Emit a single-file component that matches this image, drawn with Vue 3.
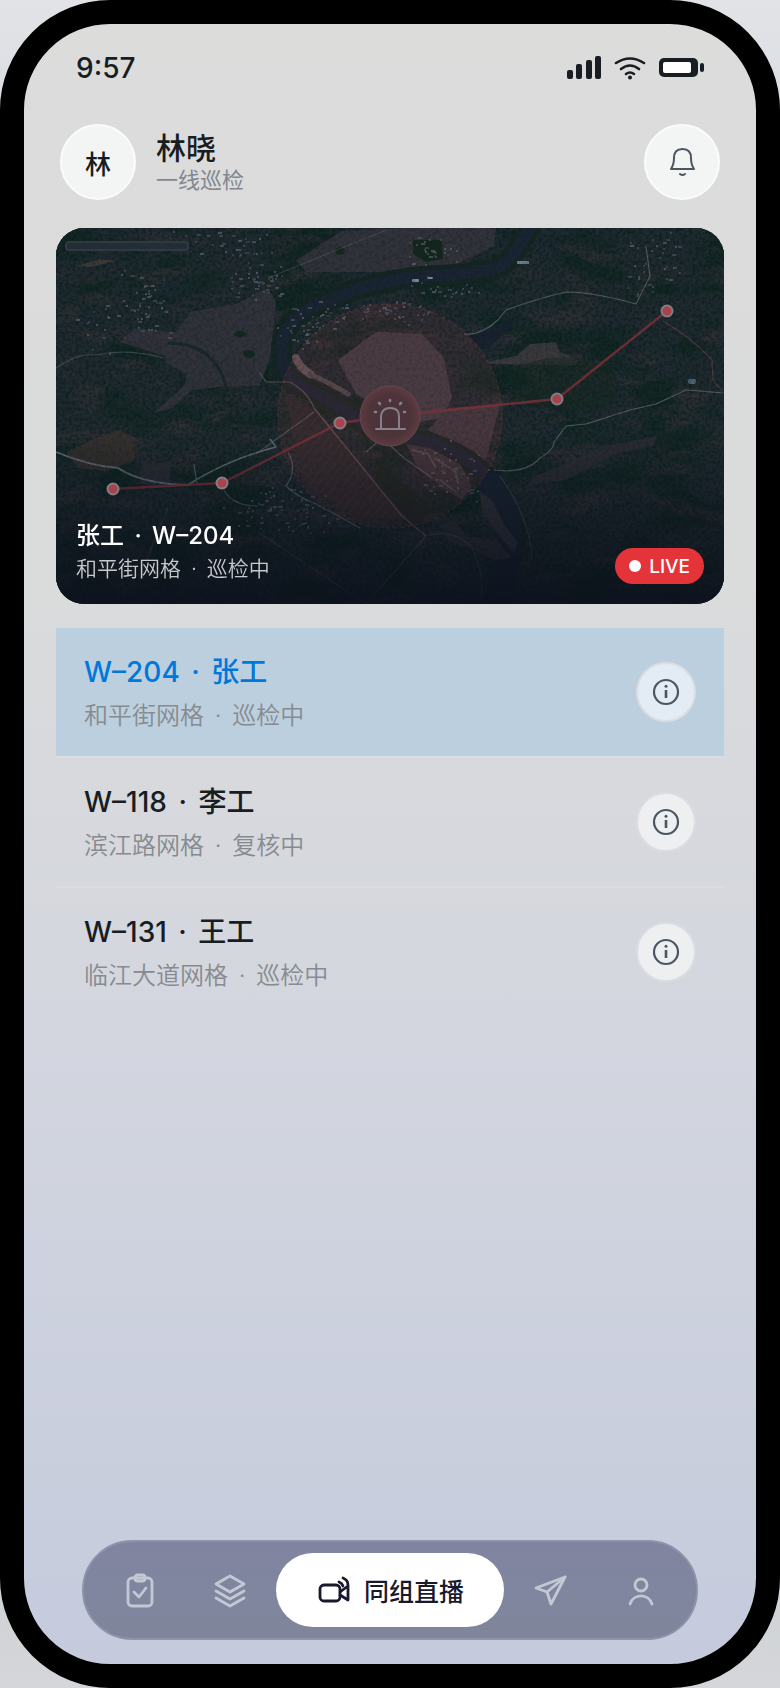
<script setup>
import { ref, computed } from 'vue'

const crews = [
  { id: 'W–204', name: '张工', area: '和平街网格', status: '巡检中' },
  { id: 'W–118', name: '李工', area: '滨江路网格', status: '复核中' },
  { id: 'W–131', name: '王工', area: '临江大道网格', status: '巡检中' }
]

const route = [
  { x: 57, y: 261 },
  { x: 166, y: 255 },
  { x: 284, y: 195 },
  { x: 501, y: 171 },
  { x: 611, y: 83 }
]

// village clusters: centre, spread and number of roofs
const villages = [
  { x: 90, y: 75, w: 30, h: 36, n: 46 },
  { x: 202, y: 52, w: 34, h: 20, n: 44 },
  { x: 160, y: 16, w: 80, h: 16, n: 34 },
  { x: 330, y: 84, w: 54, h: 14, n: 44 },
  { x: 250, y: 94, w: 34, h: 30, n: 46 },
  { x: 376, y: 22, w: 30, h: 14, n: 26 },
  { x: 595, y: 38, w: 34, h: 40, n: 34 },
  { x: 222, y: 282, w: 64, h: 26, n: 70 },
  { x: 40, y: 98, w: 40, h: 30, n: 16 },
  { x: 400, y: 62, w: 50, h: 16, n: 22 },
  { x: 396, y: 244, w: 44, h: 34, n: 44 }
]

let seed = 7
function rand() {
  seed = (seed * 16807) % 2147483647
  return seed / 2147483647
}

const roofColors = ['#5c6674', '#4a4f58', '#63585c', '#3f5066', '#555f60']
const roofs = villages.flatMap(v =>
  Array.from({ length: v.n }, () => ({
    x: Math.round(v.x + (rand() + rand() - 1) * v.w),
    y: Math.round(v.y + (rand() + rand() - 1) * v.h),
    s: rand() > 0.7 ? 4 : 2,
    fill: roofColors[Math.floor(rand() * roofColors.length)]
  }))
)

const activeId = ref('W–204')
const activeTab = ref('live')
const active = computed(() => crews.find(c => c.id === activeId.value))
const siren = { x: 334, y: 188 }
const line = computed(() =>
  [...route.slice(0, 3), siren, ...route.slice(3)].map(p => `${p.x},${p.y}`).join(' ')
)
</script>

<template>
  <div class="phone">
    <div class="status-bar">
      <span class="time">9:57</span>
      <div class="status-icons">
        <svg width="34" height="24" viewBox="0 0 34 24" fill="#171d22">
          <rect x="0" y="14" width="6" height="9" rx="2" />
          <rect x="9" y="8" width="6" height="15" rx="2" />
          <rect x="19" y="4" width="6" height="19" rx="2" />
          <rect x="28" y="0" width="6" height="23" rx="2" />
        </svg>
        <svg width="32" height="24" viewBox="0 0 32 24" fill="none" stroke="#171d22" stroke-width="2.6" stroke-linecap="round">
          <path d="M2 7 Q16 -2 30 7" />
          <path d="M7 13 Q16 6 25 13" />
          <path d="M12 18 Q16 15 20 18" />
          <circle cx="16" cy="21.5" r="2" fill="#171d22" stroke="none" />
        </svg>
        <svg width="45" height="24" viewBox="0 0 45 24">
          <rect x="0" y="2" width="39" height="19" rx="5" fill="#171d22" />
          <rect x="4" y="6" width="28" height="11" rx="2" fill="#fff" />
          <rect x="41" y="7" width="4" height="9" rx="2" fill="#171d22" />
        </svg>
      </div>
    </div>

    <header class="header">
      <div class="avatar">林</div>
      <div class="user">
        <h1>林晓</h1>
        <p>一线巡检</p>
      </div>
      <button class="bell" aria-label="通知">
        <svg width="28" height="30" viewBox="0 0 28 30" fill="none" stroke="#4b5660" stroke-width="2" stroke-linecap="round" stroke-linejoin="round">
          <path d="M3 22 C5 19 6 17 6 11 C6 5 9 2 14.5 2 C20 2 23 5 23 11 C23 17 24 19 26 22 Z" />
          <path d="M12 27 Q14.5 29 17 27" />
        </svg>
      </button>
    </header>

    <main class="content">
      <section class="map-card">
        <svg class="map" viewBox="0 0 668 376" preserveAspectRatio="xMidYMid slice" aria-hidden="true">
          <defs>
            <filter id="patches" x="0" y="0" width="100%" height="100%" color-interpolation-filters="sRGB">
              <feTurbulence type="fractalNoise" baseFrequency="0.014 0.03" numOctaves="5" seed="4" />
              <feColorMatrix values="0 0 0 0 0.07  0 0 0 0 0.15  0 0 0 0 0.14  4 0 0 0 -1.8" />
            </filter>
            <filter id="soil" x="0" y="0" width="100%" height="100%" color-interpolation-filters="sRGB">
              <feTurbulence type="fractalNoise" baseFrequency="0.02 0.05" numOctaves="5" seed="21" />
              <feColorMatrix values="0 0 0 0 0.19  0 0 0 0 0.19  0 0 0 0 0.21  0 4 0 0 -2" />
            </filter>
            <filter id="grain" x="0" y="0" width="100%" height="100%" color-interpolation-filters="sRGB">
              <feTurbulence type="fractalNoise" baseFrequency="0.3" numOctaves="3" seed="9" />
              <feColorMatrix values="0 0 0 0 0.04  0 0 0 0 0.11  0 0 0 0 0.1  0 3 0 0 -1.3" />
            </filter>
            <linearGradient id="shade" x1="0" y1="0" x2="0" y2="1">
              <stop offset="0.55" stop-color="#0b101b" stop-opacity="0" />
              <stop offset="1" stop-color="#0b101b" stop-opacity="0.85" />
            </linearGradient>
            <radialGradient id="glow">
              <stop offset="0" stop-color="#4a3339" />
              <stop offset="0.7" stop-color="#4d343a" />
              <stop offset="1" stop-color="#5e3a40" />
            </radialGradient>
            <pattern id="plots" width="19" height="14" patternUnits="userSpaceOnUse" patternTransform="rotate(-28) skewX(12)">
              <path d="M0 0H19M0 0V14" stroke="#25282f" stroke-width="1" />
            </pattern>
            <pattern id="rows" width="7" height="60" patternUnits="userSpaceOnUse" patternTransform="rotate(38)">
              <path d="M0 0V60" stroke="#5b4646" stroke-width="1" opacity="0.4" />
            </pattern>
          </defs>

          <rect width="668" height="376" fill="#1f2a30" />
          <rect width="668" height="376" filter="url(#patches)" />
          <rect width="668" height="376" filter="url(#soil)" opacity="0.8" />
          <rect width="668" height="376" filter="url(#grain)" opacity="0.5" />

          <!-- farmland -->
          <g fill="#34343c" opacity="0.9">
            <path d="M134 84 L180 76 L212 60 L220 74 L214 130 L204 157 L162 159 L136 162 L116 180 L98 185 L128 158 L131 146 L112 136 L108 128 L64 114 L78 101 L120 104 Z" />
            <path d="M240 32 L286 3 L350 0 L440 0 L438 18 L400 36 L340 44 L250 44 Z" />
            <path d="M10 224 L40 210 L62 202 L80 210 L78 232 L52 243 L22 240 Z" fill="#36312f" />
            <path d="M86 236 L116 234 L114 256 L84 256 Z" fill="#2b2f35" />
            <path d="M430 134 L460 128 L474 116 L500 114 L504 124 L522 132 L520 137 L436 136 Z" fill="#3d3a3e" />
            <path d="M480 248 L550 218 L600 208 L598 218 L560 226 L510 252 L470 258 Z" fill="#2d2d35" />
          </g>
          <path d="M134 84 L180 76 L212 60 L220 74 L214 130 L204 157 L162 159 L136 162 L116 180 L98 185 L128 158 L131 146 L112 136 L64 114 Z M240 32 L286 3 L440 0 L438 18 L400 36 L250 44 Z" fill="url(#plots)" />
          <path d="M112 115 Q158 115 170 158" fill="none" stroke="#1a2828" stroke-width="3" />
          <g fill="#14271f">
            <ellipse cx="193" cy="126" rx="6" ry="4" />
            <ellipse cx="184" cy="106" rx="6" ry="3" />
            <ellipse cx="284" cy="23" rx="5" ry="4" />
            <path d="M357 12 L386 12 L387 31 L370 34 L357 26 Z" />
            <path d="M450 144 Q500 118 552 138 Q575 160 552 180 Q500 190 456 170 Z" opacity="0.5" />
          </g>

          <!-- fields enclosed by the bend -->
          <path d="M282 132 L320 104 L366 106 L388 130 L396 170 L386 190 L352 196 L300 166 Z" fill="#3e3b43" />
          <path d="M392 180 L444 176 L430 232 L400 216 L372 202 Z" fill="#39353c" />
          <path d="M230 170 L260 182 L352 290 L300 292 L246 250 Z" fill="#26282b" />
          <path d="M230 170 L260 182 L352 290 L300 292 L246 250 Z M392 180 L444 176 L430 232 L372 202 Z" fill="url(#rows)" />
          <path d="M324 232 L376 282 L360 300 L318 254 Z" fill="#152520" />

          <!-- river and sandbanks -->
          <g fill="none" stroke-linecap="round" stroke-linejoin="round">
            <path d="M476 -4 Q462 24 446 38 Q420 47 370 48 Q310 54 274 72 Q228 88 226 116 Q224 146 240 156 Q270 168 300 190 Q318 208 350 210 Q410 220 432 252 Q464 296 458 322 Q446 352 440 390" stroke="#152521" stroke-width="21" />
            <path d="M476 -4 Q462 24 446 38 Q420 47 370 48 Q310 54 274 72 Q228 88 226 116 Q224 146 240 156 Q270 168 300 190 Q318 208 350 210 Q410 220 432 252 Q464 296 458 322 Q446 352 440 390" stroke="#1a2432" stroke-width="12" />
            <path d="M436 258 Q458 292 452 326 Q444 354 440 384" stroke="#192331" stroke-width="26" />
            <path d="M240 130 Q244 140 254 146" stroke="#5b5456" stroke-width="8" />
            <path d="M254 146 Q272 154 292 166" stroke="#4c474b" stroke-width="5" />
          </g>
          <path d="M350 216 L374 220 L404 236 L416 258 L406 272 L384 258 L362 240 Z" fill="#38343a" />
          <path d="M384 298 L398 292 L410 308 L440 312 L456 330 L438 332 L414 320 L392 314 Z" fill="#2d3037" />
          <path d="M424 264 L436 272 L448 296 L462 314 L458 326 L440 304 L426 284 Z" fill="#30323a" />
          <path d="M356 222 L372 226 L380 240 M378 230 L400 244 L402 256 M384 252 L400 264" fill="none" stroke="#544c50" stroke-width="2" />
          <path d="M412 109 Q446 96 464 85 Q452 104 428 123 Z" fill="#18212e" />

          <!-- roads -->
          <g fill="none" stroke="#6b7177" stroke-width="1.2" stroke-linejoin="round" opacity="0.7">
            <path d="M408 106 Q424 108 442 92 L450 82 Q480 71 510 64 Q538 64 580 76 L594 48 L590 18" />
            <path d="M438 242 Q470 246 484 230 Q498 222 498 214 L510 198 L530 196 L574 182 L600 176 L630 162 L668 165" />
            <path d="M607 93 Q636 110 656 132 L657 152 L668 166" stroke="#634144" />
            <path d="M204 145 L210 154 L234 154 Q252 164 258 180 L346 288 L370 308" stroke="#74605f" />
            <path d="M258 184 L200 226" stroke="#5a6064" />
            <path d="M0 224 Q34 238 62 240 Q86 256 132 257 Q170 232 220 219 L214 211" stroke="#78838b" stroke-width="1.8" />
            <path d="M232 224 Q242 242 230 258 Q240 268 260 276 L304 300" />
            <path d="M141 256 L138 236 M168 262 Q176 278 202 278" />
            <path d="M112 280 Q94 318 86 350 M202 304 L310 376 M370 308 L308 378" opacity="0.5" />
            <path d="M0 140 Q24 124 40 127 Q70 120 108 130" opacity="0.6" />
            <path d="M212 50 L330 2" opacity="0.5" />
            <path d="M310 224 L326 210 L348 230 L376 250" stroke="#756562" />
            <path d="M370 308 Q398 300 416 320 Q430 350 424 376 M444 248 Q474 290 476 330" opacity="0.5" />
          </g>
          <path d="M20 38 L44 31 L60 33 L34 39 Z" fill="#3c3835" />
          <g fill="#6d8b9c">
            <rect x="356" y="51" width="7" height="3" rx="1" />
            <rect x="371" y="49" width="6" height="2" rx="1" />
            <rect x="461" y="33" width="12" height="3" rx="1" />
            <rect x="632" y="151" width="8" height="5" rx="2" opacity="0.6" />
          </g>
          <rect v-for="(r, i) in roofs" :key="i" :x="r.x" :y="r.y" :width="r.s" height="2" :fill="r.fill" opacity="0.7" />
          <rect width="668" height="376" filter="url(#grain)" opacity="0.25" />
          <rect x="10" y="14" width="122" height="8" rx="3" fill="#222d36" stroke="#2f3941" stroke-width="2" />

          <circle :cx="siren.x" :cy="siren.y" r="112" fill="#a5454a" fill-opacity="0.12" stroke="#8c353e" stroke-opacity="0.5" stroke-dasharray="4 3" />
          <polyline :points="line" fill="none" stroke="#7e3038" stroke-width="2.4" opacity="0.8" />
          <rect width="668" height="376" fill="url(#shade)" />
          <circle v-for="p in route" :key="p.x" :cx="p.x" :cy="p.y" r="5.5" fill="#a8424c" stroke="#847d84" stroke-width="2" />
          <circle :cx="siren.x" :cy="siren.y" r="30" fill="url(#glow)" stroke="#62484e" />
          <g fill="none" stroke="#858089" stroke-width="2" stroke-linecap="round">
            <path d="M320 201 H349 M325 200 V188 Q326 180 334 180 Q343 180 343 188 V200" />
            <path d="M334 173 V172 M324 176 L323 175 M344 176 L345 175 M320 184 H319 M348 184 H349" stroke-width="2.6" />
          </g>
        </svg>
        <div class="caption">
          <strong>{{ active.name }} <span class="sep">·</span> {{ active.id }}</strong>
          <span>{{ active.area }} <span class="sep">·</span> {{ active.status }}</span>
        </div>
        <span class="live"><i class="dot"></i>LIVE</span>
      </section>

      <ul class="crew-list">
        <li v-for="crew in crews" :key="crew.id" :class="{ active: crew.id === activeId }" @click="activeId = crew.id">
          <div class="crew">
            <h2>{{ crew.id }} <span class="sep">·</span> {{ crew.name }}</h2>
            <p>{{ crew.area }} <span class="sep">·</span> {{ crew.status }}</p>
          </div>
          <button class="info" aria-label="详情" @click.stop>
            <svg width="28" height="28" viewBox="0 0 28 28" fill="none" stroke="#4c5662" stroke-width="2.2">
              <circle cx="14" cy="14" r="12" />
              <path d="M14 12V20" stroke-width="2.6" />
              <circle cx="14" cy="8.3" r="1.5" fill="#4c5662" stroke="none" />
            </svg>
          </button>
        </li>
      </ul>
    </main>

    <nav class="tabs">
      <button class="tab" aria-label="任务" @click="activeTab = 'tasks'">
        <svg width="36" height="36" viewBox="0 0 36 36">
          <rect x="6" y="6" width="24" height="28" rx="4" />
          <rect x="13" y="3" width="10" height="6" rx="2.5" />
          <path d="M12 20 L17 25 L24 16" />
        </svg>
      </button>
      <button class="tab" aria-label="图层" @click="activeTab = 'layers'">
        <svg width="36" height="36" viewBox="0 0 36 36">
          <path d="M18 4 L32 12 L18 20 L4 12 Z" />
          <path d="M4 19 L18 27 L32 19" />
          <path d="M4 26 L18 34 L32 26" />
        </svg>
      </button>
      <button class="tab current" @click="activeTab = 'live'">
        <svg width="36" height="36" viewBox="0 0 36 36">
          <rect x="4" y="13" width="20" height="16" rx="4" />
          <path d="M24 20 L32 14 V28 L24 23" />
          <path d="M23 10 Q26 11 27 14 M27 6 Q32 8 32 13" />
        </svg>
        <span>同组直播</span>
      </button>
      <button class="tab" aria-label="发送" @click="activeTab = 'send'">
        <svg width="36" height="36" viewBox="0 0 36 36">
          <path d="M33 5 L4 16 L15 20 L19 32 Z" />
          <path d="M33 5 L15 20" />
        </svg>
      </button>
      <button class="tab" aria-label="我的" @click="activeTab = 'me'">
        <svg width="36" height="36" viewBox="0 0 36 36">
          <circle cx="19" cy="13" r="6" />
          <path d="M8 32 A11.5 11.5 0 0 1 30 32" />
        </svg>
      </button>
    </nav>
  </div>
</template>

<style>
body {
  margin: 0;
  background: linear-gradient(180deg, #e2e3e7, #d8dde2 8%, #c9cdd2 85%, #d4d6d9);
}
</style>

<style scoped>
* {
  box-sizing: border-box;
  margin: 0;
  padding: 0;
}

.phone {
  display: flex;
  flex-direction: column;
  min-height: 100vh;
  padding: 0 32px 24px;
  border: 24px solid #000;
  border-radius: 110px;
  background: linear-gradient(180deg, #dcdcdb 0%, #dadbdb 35%, #d3d6df 62%, #c5cbdd 100%) padding-box;
  color: #171d22;
  font-family: Inter, "Noto Sans CJK SC", sans-serif;
}

button {
  border: none;
  background: none;
  font: inherit;
  color: inherit;
  cursor: pointer;
}

svg {
  display: block;
}

.sep {
  margin: 0 4px;
}

.status-bar {
  display: flex;
  align-items: center;
  justify-content: space-between;
  height: 88px;
  padding: 0 20px;
}

.time {
  font-size: 28px;
  font-weight: 500;
}

.status-icons {
  display: flex;
  gap: 13px;
}

.header {
  display: flex;
  align-items: center;
  gap: 20px;
  margin: 12px 4px 28px;
}

.avatar,
.bell {
  display: flex;
  align-items: center;
  justify-content: center;
  width: 76px;
  height: 76px;
  border: 2px solid #fafbfb;
  border-radius: 50%;
  background: #f3f5f5;
}

.avatar {
  font-size: 26px;
  font-weight: 500;
}

.user {
  flex: 1;
}

.user h1 {
  font-size: 30px;
  font-weight: 500;
  line-height: 36px;
}

.user p {
  color: #81888e;
  font-size: 22px;
  line-height: 28px;
}

.content {
  flex: 1;
}

.map-card {
  position: relative;
  height: 376px;
  overflow: hidden;
  border-radius: 28px;
  background: #1d282b;
}

.map {
  width: 100%;
  height: 100%;
}

.caption {
  position: absolute;
  left: 20px;
  bottom: 20px;
  display: flex;
  flex-direction: column;
  gap: 3px;
  color: #c6c8ca;
  font-size: 21px;
  font-weight: 350;
  line-height: 30px;
}

.caption strong {
  color: #fff;
  font-size: 24px;
  font-weight: 500;
}

.live {
  position: absolute;
  right: 20px;
  bottom: 20px;
  display: flex;
  align-items: center;
  gap: 8px;
  height: 36px;
  padding: 0 14px;
  border-radius: 18px;
  background: #e43439;
  color: #fff;
  font-size: 19px;
  font-weight: 500;
}

.dot {
  width: 12px;
  height: 12px;
  border-radius: 50%;
  background: #fff;
}

.crew-list {
  margin-top: 24px;
  list-style: none;
}

.crew-list li {
  display: flex;
  align-items: center;
  justify-content: space-between;
  height: 130px;
  padding: 0 28px;
  border-bottom: 2px solid #dbdde1;
  background-clip: padding-box;
  cursor: pointer;
}

.crew-list li:last-child {
  border-bottom-color: transparent;
}

.crew-list li.active {
  background-color: #bccfdf;
}

.crew {
  padding-top: 4px;
}

.crew-list h2 {
  font-size: 28px;
  font-weight: 500;
  line-height: 40px;
}

.crew-list .active h2 {
  color: #0078d9;
}

.crew-list p {
  margin-top: 4px;
  color: #868b90;
  font-size: 24px;
  font-weight: 350;
  line-height: 40px;
}

.info {
  display: flex;
  align-items: center;
  justify-content: center;
  width: 60px;
  height: 60px;
  border: 2px solid #dadde1;
  border-radius: 50%;
  background: #eeeff1;
}

.active .info {
  background: #e3ebf4;
}

.tabs {
  display: flex;
  align-items: center;
  gap: 2px;
  height: 100px;
  margin: 0 26px;
  padding: 0 12px;
  border: 2px solid #8e93ac;
  border-radius: 50px;
  background: linear-gradient(180deg, #8184a0, #7f869f 50%, #80859a);
}

.tab {
  display: flex;
  flex: 1;
  align-items: center;
  justify-content: center;
  height: 74px;
}

.tab svg {
  fill: none;
  stroke: #c4c8d4;
  stroke-width: 2.8;
  stroke-linecap: round;
  stroke-linejoin: round;
}

.tab.current {
  flex: none;
  gap: 12px;
  padding: 0 40px;
  border-radius: 37px;
  background: #fff;
  color: #19192e;
  font-size: 25px;
  font-weight: 500;
}

.tab.current svg {
  stroke: #19192e;
}
</style>
